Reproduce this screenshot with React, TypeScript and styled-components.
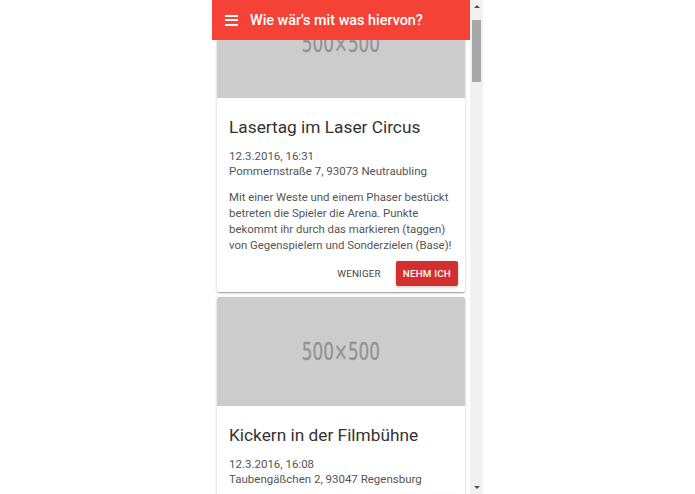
import { useLayoutEffect, useRef } from 'react';
import styled, { createGlobalStyle } from 'styled-components';

const GlobalStyle = createGlobalStyle`
  html, body {
    margin: 0;
    padding: 0;
    background: #fff;
  }
  body {
    font-family: Roboto, "Liberation Sans", sans-serif;
  }
`

const Page = styled.div`
  width: 100%;
  height: 494px;
  display: flex;
  justify-content: center;
`

const Frame = styled.div`
  width: 271px;
  height: 494px;
  display: flex;
  background: #fff;
`

const Viewport = styled.div`
  width: 258px;
  height: 494px;
  overflow: hidden;
`

const ScrollBar = styled.div`
  width: 13px;
  height: 494px;
  display: flex;
  flex-direction: column;
  background: #f1f1f1;
`

const Arrow = styled.div<{ $down?: boolean }>`
  height: 13px;
  display: flex;
  align-items: center;
  justify-content: center;
  &::after{
    content: '';
    width: 0;
    height: 0;
    border-left: 3px solid transparent;
    border-right: 3px solid transparent;
    border-bottom: ${(props) => (props.$down ? 'none' : '3px solid #505050')};
    border-top: ${(props) => (props.$down ? '3px solid #505050' : 'none')};
  }
`

const Track = styled.div`
  flex: 1;
  padding: 7px 2px 0;
`

const Thumb = styled.div`
  height: 62px;
  background: #a8a8a8;
`

const AppBar = styled.header`
  position: sticky;
  top: 0;
  z-index: 2;
  height: 40px;
  display: flex;
  align-items: center;
  gap: 12px;
  padding: 0 13px;
  background: #f44336;
  color: #fff;
  .icon{
    width: 13px;
    height: 11px;
    display: flex;
    flex-direction: column;
    justify-content: space-between;
    span{
      height: 2px;
      background: #fff;
    }
  }
  h1{
    margin: 0;
    font-size: 14.4px;
    font-weight: 500;
  }
`

const List = styled.div`
  display: flex;
  flex-direction: column;
  gap: 5px;
  padding: 5px 5px 8px;
`

const Card = styled.article`
  background: #fff;
  border-radius: 2px;
  overflow: hidden;
  box-shadow: 0 1px 3px rgba(0,0,0,0.2), 0 1px 1px rgba(0,0,0,0.14), 0 2px 1px -1px rgba(0,0,0,0.12);
`

const Placeholder = styled.div`
  height: 109px;
  display: flex;
  align-items: center;
  justify-content: center;
  background: #cccccc;
  color: #939393;
  font-family: "DejaVu Sans", sans-serif;
  font-size: 24px;
  span{
    display: inline-block;
    transform: scaleX(0.7);
    -webkit-text-stroke: 0.3px #939393;
  }
`

const Content = styled.div`
  padding: 16px 8px 0 12px;
  color: #555;
  h2{
    margin: 0;
    font-size: 17.3px;
    font-weight: 400;
    line-height: 27px;
    color: #333;
  }
  .meta{
    margin: 8px 0 0;
    font-size: 11.5px;
    line-height: 15px;
  }
  .text{
    margin: 10px 0 0;
    font-size: 11.4px;
    line-height: 16px;
  }
`

const Actions = styled.div`
  display: flex;
  justify-content: flex-end;
  align-items: center;
  gap: 8px;
  padding: 8px 7px 6px;
`

const Button = styled.button<{ $raised?: boolean }>`
  height: 25px;
  padding: 0 7px;
  border: none;
  border-radius: 2px;
  font-family: Roboto, "Liberation Sans", sans-serif;
  font-size: 9.8px;
  font-weight: ${(props) => (props.$raised ? 500 : 400)};
  letter-spacing: 0.2px;
  text-transform: uppercase;
  color: ${(props) => (props.$raised ? '#fff' : '#444')};
  background: ${(props) => (props.$raised ? '#d32f2f' : 'transparent')};
  box-shadow: ${(props) => (props.$raised ? '0 1px 3px rgba(0,0,0,0.25)' : 'none')};
  min-width: ${(props) => (props.$raised ? '62px' : '0')};
`

type EventItem = {
  title: string
  date: string
  place: string
  text?: string
}

const events: EventItem[] = [
  {
    title: 'Lasertag im Laser Circus',
    date: '12.3.2016, 16:31',
    place: 'Pommernstraße 7, 93073 Neutraubling',
    text: 'Mit einer Weste und einem Phaser bestückt betreten die Spieler die Arena. Punkte bekommt ihr durch das markieren (taggen) von Gegenspielern und Sonderzielen (Base)!',
  },
  { title: 'Kickern in der Filmbühne', date: '12.3.2016, 16:08', place: 'Taubengäßchen 2, 93047 Regensburg' },
  { title: 'Bowling im Plaza', date: '12.3.2016, 15:40', place: 'Friedenstraße 23, 93053 Regensburg' },
  { title: 'Minigolf am Westbad', date: '12.3.2016, 15:12', place: 'Messerschmittstraße 4, 93049 Regensburg' },
  { title: 'Klettern im DAV Zentrum', date: '12.3.2016, 14:55', place: 'Ziegelhüttenweg 1, 93055 Regensburg' },
  { title: 'Billard im Queens', date: '12.3.2016, 14:20', place: 'Hemauerstraße 4, 93047 Regensburg' },
]

export default function App() {
  const viewport = useRef<HTMLDivElement>(null);

  useLayoutEffect(() => {
    if (viewport.current != null) {
      viewport.current.scrollTop = 56;
    }
  }, [])

  return (
    <Page>
      <GlobalStyle />
      <Frame>
        <Viewport ref={viewport}>
          <AppBar>
            <div className="icon">
              <span />
              <span />
              <span />
            </div>
            <h1>Wie wär's mit was hiervon?</h1>
          </AppBar>
          <List>
            {events.map((item) => (
              <Card key={item.title}>
                <Placeholder><span>500×500</span></Placeholder>
                <Content>
                  <h2>{item.title}</h2>
                  <p className="meta">
                    {item.date}
                    <br />
                    {item.place}
                  </p>
                  {item.text && <p className="text">{item.text}</p>}
                </Content>
                <Actions>
                  <Button>Weniger</Button>
                  <Button $raised>Nehm ich</Button>
                </Actions>
              </Card>
            ))}
          </List>
        </Viewport>
        <ScrollBar>
          <Arrow />
          <Track>
            <Thumb />
          </Track>
          <Arrow $down />
        </ScrollBar>
      </Frame>
    </Page>
  )
}
